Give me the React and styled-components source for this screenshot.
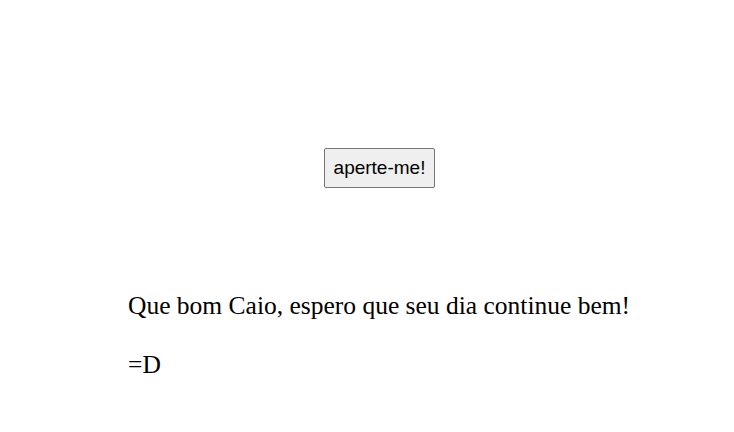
import React from "react";
import styled, { createGlobalStyle } from "styled-components";

const Global = createGlobalStyle`
  html, body { margin: 0; padding: 0; background: #fff; }
  body { font-family: "Liberation Serif", "Times New Roman", serif; color: #000; }
`;

const Page = styled.div`
  display: flex;
  flex-direction: column;
  padding: 148px 0 0 128px;
`;

const ButtonRow = styled.div`
  display: flex;
  justify-content: flex-start;
  padding-left: 196px;
`;

const Button = styled.button`
  font-family: "Liberation Sans", Arial, sans-serif;
  font-size: 19px;
  color: #000;
  background: #efefef;
  border: 1px solid #767676;
  border-radius: 2px;
  padding: 0;
  height: 40px;
  width: 111px;
  cursor: pointer;
`;

const Message = styled.p`
  font-size: 25.5px;
  line-height: 30px;
  margin: 0;
`;

const Messages = styled.div`
  display: flex;
  flex-direction: column;
  gap: 29px;
  margin-top: 103px;
`;

export default function App() {
  return (
    <>
      <Global />
      <Page>
        <ButtonRow>
          <Button>aperte-me!</Button>
        </ButtonRow>
        <Messages>
          <Message>Que bom Caio, espero que seu dia continue bem!</Message>
          <Message>=D</Message>
        </Messages>
      </Page>
    </>
  );
}
